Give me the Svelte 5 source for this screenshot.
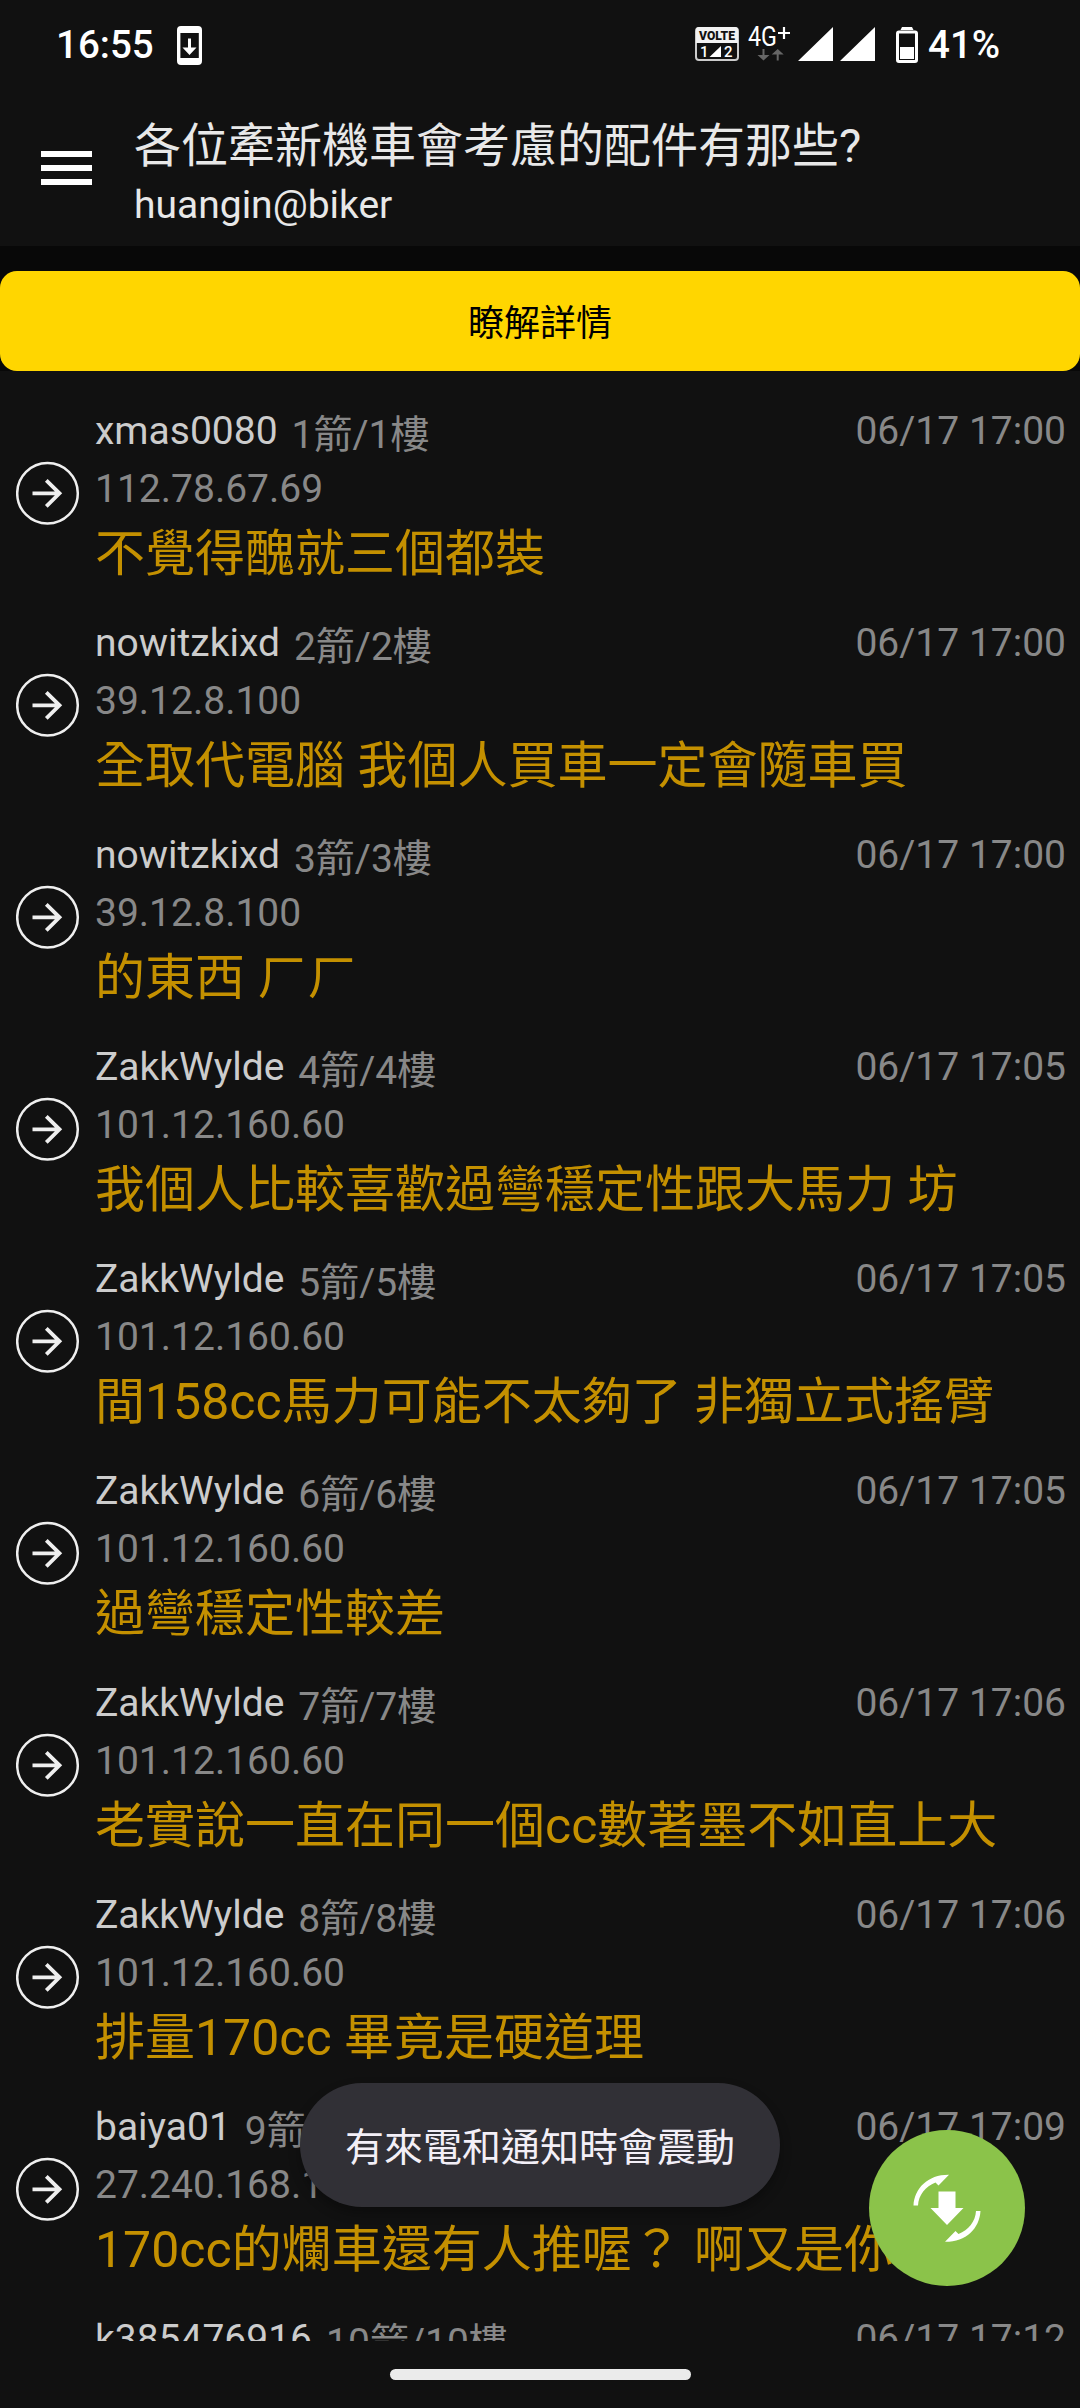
<script lang="ts">
  interface Push {
    user: string
    floor: number
    ip: string
    time: string
    text: string
  }

  const title = '各位牽新機車會考慮的配件有那些?'
  const author = 'huangin@biker'

  const pushes: Push[] = [
    { user: 'xmas0080', floor: 1, ip: '112.78.67.69', time: '06/17 17:00', text: '不覺得醜就三個都裝' },
    { user: 'nowitzkixd', floor: 2, ip: '39.12.8.100', time: '06/17 17:00', text: '全取代電腦 我個人買車一定會隨車買' },
    { user: 'nowitzkixd', floor: 3, ip: '39.12.8.100', time: '06/17 17:00', text: '的東西 ㄏㄏ' },
    { user: 'ZakkWylde', floor: 4, ip: '101.12.160.60', time: '06/17 17:05', text: '我個人比較喜歡過彎穩定性跟大馬力 坊' },
    { user: 'ZakkWylde', floor: 5, ip: '101.12.160.60', time: '06/17 17:05', text: '間158cc馬力可能不太夠了 非獨立式搖臂' },
    { user: 'ZakkWylde', floor: 6, ip: '101.12.160.60', time: '06/17 17:05', text: '過彎穩定性較差' },
    { user: 'ZakkWylde', floor: 7, ip: '101.12.160.60', time: '06/17 17:06', text: '老實說一直在同一個cc數著墨不如直上大' },
    { user: 'ZakkWylde', floor: 8, ip: '101.12.160.60', time: '06/17 17:06', text: '排量170cc 畢竟是硬道理' },
    { user: 'baiya01', floor: 9, ip: '27.240.168.1', time: '06/17 17:09', text: '170cc的爛車還有人推喔？ 啊又是你' },
    { user: 'k385476916', floor: 10, ip: '', time: '06/17 17:12', text: '' },
  ]
</script>

<div class="screen">
  <div class="status">
    <span class="clock">16:55</span>
    <svg class="update" width="25" height="40" viewBox="0 0 25 40">
      <path fill="#fff" fill-rule="evenodd" d="M4 0h17a4 4 0 0 1 4 4v31a4 4 0 0 1-4 4H4a4 4 0 0 1-4-4V4a4 4 0 0 1 4-4zM3.4 7v25h18.400V7z" />
      <path fill="#fff" d="M11 12.500h3v9h5.500L12.500 29l-7-7.500H11z" />
    </svg>
    <svg class="radio" width="181" height="38" viewBox="0 0 181 38">
      <rect x="1" y="2" width="42" height="32" rx="3" fill="none" stroke="#ccc" stroke-width="2" />
      <path fill="#f2f2f2" d="M1 4q0-3 3-3h36q3 0 3 3v13H1z" />
      <text x="4" y="14" class="volte" textLength="36" lengthAdjust="spacingAndGlyphs">VOLTE</text>
      <text x="5" y="31" class="sim">1</text>
      <text x="29" y="31" class="sim">2</text>
      <path fill="#fff" d="M26 20v11H14.500z" />
      <text x="53" y="20" class="net" textLength="29" lengthAdjust="spacingAndGlyphs">4G</text>
      <path stroke="#fff" stroke-width="2.200" d="M83 7h12M89 1v12" />
      <path fill="#666" d="M67.500 23h2v6h5l-6 5.500-6-5.500h5zM81.700 34.500h2v-6h5l-6-5.500-6 5.500h5z" />
      <path fill="#fff" d="M138 1v34h-35zM180 1v34h-35z" />
    </svg>
    <svg class="battery" width="22" height="36" viewBox="0 0 22 36">
      <path fill="#fff" d="M6 0h10l1.500 3h-13z" />
      <rect x="1.500" y="5" width="19" height="29.500" rx="1.500" fill="none" stroke="#fff" stroke-width="3" />
      <path fill="#fff" d="M4 20h14v12H4z" />
    </svg>
    <span class="percent">41%</span>
  </div>

  <header>
    <div class="menu"><i></i><i></i><i></i></div>
    <div class="heading">
      <h1>{title}</h1>
      <p>{author}</p>
    </div>
  </header>

  <div class="ad"><button>瞭解詳情</button></div>

  <main>
    {#each pushes as push}
      <article>
        <svg class="arrow" width="64" height="64" viewBox="0 0 64 64" fill="none" stroke="#efefef">
          <circle cx="31.500" cy="32.300" r="30.300" stroke-width="2.500" />
          <path stroke-width="3.800" d="M16.500 32.300h27M30.300 19.300l13.200 13-13.200 13" />
        </svg>
        <div class="body">
          <div class="meta">
            <span class="user">{push.user}</span>
            <span class="floor">{push.floor}箭/{push.floor}樓</span>
            <span class="time">{push.time}</span>
          </div>
          <div class="ip">{push.ip}</div>
          <div class="text">{push.text}</div>
        </div>
      </article>
    {/each}
  </main>

  <nav><span></span></nav>

  <div class="toast">有來電和通知時會震動</div>

  <div class="fab">
    <svg width="68" height="68" viewBox="0 0 68 68" fill="#fff">
      <path d="M25.500 17.500h17v16.500h8L34 51 17.500 34h8z" />
      <path d="M.5 31.500C1.500 14 15 .5 36 .7L25.500 11.500 22.500 8.500C12.500 12.500 5.500 21 5 31.500z" />
      <path d="M67.500 37C66.500 54.500 53 68 32 67.800L42.500 57 45.500 60C55.500 56 62.500 47.500 63 37z" />
    </svg>
  </div>
</div>

<style>
  :global(body) {
    background: #111;
  }
  .screen {
    position: relative;
    display: flex;
    flex-direction: column;
    width: 1080px;
    height: 2408px;
    overflow: hidden;
    background: #111;
    font-family: Roboto, 'Noto Sans CJK TC', sans-serif;
    color: #e8e8e8;
  }

  /* system status bar */
  .status {
    display: flex;
    align-items: flex-start;
    height: 88px;
    padding: 0 0 0 56px;
    box-sizing: border-box;
    color: #fff;
    font-weight: 500;
    font-size: 38.500px;
    line-height: 90px;
  }
  .clock {
    width: 121px;
  }
  .update {
    margin-top: 26px;
  }
  .radio {
    margin: 26px 0 0 auto;
  }
  .battery {
    margin: 27px 10px 0 20px;
  }
  .percent {
    width: 152px;
  }
  .volte {
    font-size: 13px;
    font-weight: 900;
    fill: #111;
  }
  .sim {
    font-size: 15px;
    fill: #fff;
  }
  .net {
    font-size: 27px;
    font-weight: 400;
    fill: #fff;
  }

  header {
    display: flex;
    height: 158px;
  }
  .menu {
    display: flex;
    flex-direction: column;
    gap: 8px;
    padding: 63px 42px 0 41px;
  }
  .menu i {
    width: 51px;
    height: 6px;
    background: #fff;
  }
  .heading {
    padding-top: 25px;
  }
  h1 {
    margin: 0;
    font-size: 47px;
    font-weight: 400;
    line-height: 66px;
    white-space: nowrap;
  }
  p {
    margin: 0;
    font-size: 39px;
    line-height: 52px;
  }

  .ad {
    height: 125px;
    padding-top: 25px;
    box-sizing: border-box;
    background: #080808;
  }
  .ad button {
    display: block;
    width: 100%;
    height: 100px;
    padding: 0 0 2px;
    border: 0;
    border-radius: 17px;
    background: #ffd600;
    color: #000;
    font: inherit;
    font-size: 36px;
  }

  main {
    height: 1970px;
    overflow: hidden;
  }
  article {
    display: flex;
    height: 212px;
  }
  .arrow {
    margin: 90px 15px 0 16px;
  }
  .body {
    flex: 1;
    padding: 31px 14px 0 0;
    white-space: nowrap;
  }
  .meta {
    display: flex;
    height: 58px;
    font-size: 39px;
    line-height: 58px;
  }
  .user {
    color: #ccc;
  }
  .floor {
    margin: 4px 0 0 14px;
    color: #888;
  }
  .time {
    margin-left: auto;
    color: #888;
  }
  .ip {
    height: 58px;
    color: #888;
    font-size: 39px;
    line-height: 58px;
  }
  .text {
    height: 65px;
    color: #c49000;
    font-size: 50px;
    line-height: 72px;
  }

  nav {
    flex: 1;
    display: flex;
    justify-content: center;
    padding-top: 28px;
  }
  nav span {
    width: 301px;
    height: 11px;
    border-radius: 6px;
    background: #ebebeb;
  }

  .toast {
    position: absolute;
    left: 300px;
    top: 2083px;
    width: 480px;
    height: 124px;
    border-radius: 62px;
    background: #313036;
    box-shadow: 0 6px 12px rgba(0, 0, 0, 0.3);
    color: #f3eff7;
    font-size: 39px;
    line-height: 130px;
    text-align: center;
  }
  .fab {
    position: absolute;
    left: 869px;
    top: 2130px;
    display: flex;
    align-items: center;
    justify-content: center;
    width: 156px;
    height: 156px;
    border-radius: 50%;
    background: #8bc34a;
  }
</style>
